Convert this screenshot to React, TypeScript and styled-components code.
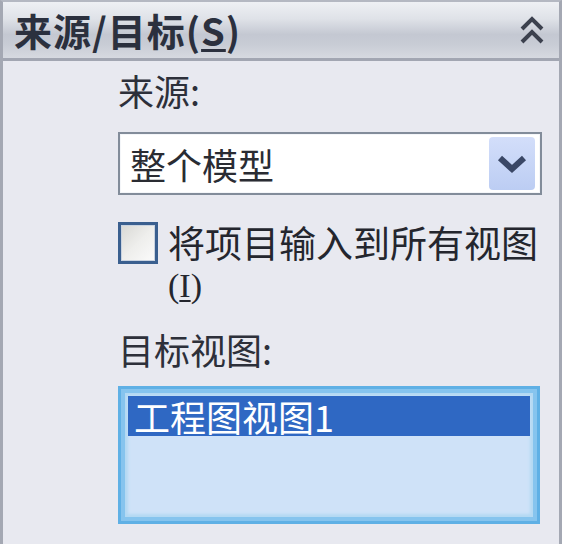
import React from "react";
import styled, { createGlobalStyle } from "styled-components";

const GlobalStyle = createGlobalStyle`
  html, body {
    margin: 0;
    padding: 0;
    background: #e8e9f0;
  }
  body {
    font-family: "Noto Sans CJK SC", "Noto Sans", sans-serif;
  }
`;

const Panel = styled.div`
  width: 562px;
  height: 544px;
  box-sizing: border-box;
  border-left: 3px solid #a4a8b3;
  border-right: 3px solid #a4a8b3;
  border-top: 2px solid #b4b8c2;
  background: #e8e9f0;
  display: flex;
  flex-direction: column;
  overflow: hidden;
`;

const Header = styled.div`
  height: 56px;
  flex-shrink: 0;
  display: flex;
  align-items: center;
  justify-content: space-between;
  padding: 0 14px 0 11px;
  background: linear-gradient(
    #eef0f4 0%,
    #dfe2e8 30%,
    #c4c8d2 58%,
    #c8ccd5 75%,
    #d6d9e0 100%
  );
  border-bottom: 3px solid #a2a6b2;
`;

const Title = styled.span`
  font-size: 38px;
  font-weight: 700;
  color: #2b303e;
  letter-spacing: 1px;
  line-height: 1;
  u {
    text-decoration-thickness: 3px;
    text-underline-offset: 3px;
  }
`;

const Body = styled.div`
  display: flex;
  flex-direction: column;
  padding: 8px 17px 0 115px;
`;

const Label = styled.div<{ $top?: number }>`
  font-size: 36px;
  line-height: 42px;
  color: #2d303a;
  margin-top: ${(p) => p.$top ?? 0}px;
`;

const Select = styled.div`
  margin-top: 21px;
  height: 63px;
  box-sizing: border-box;
  border: 2px solid #828c9a;
  box-shadow: inset 0 0 0 1px #f4f6f9;
  background: #fff;
  display: flex;
  align-items: center;
  justify-content: space-between;
  padding: 0 5px 0 10px;
`;

const SelectText = styled.span`
  font-size: 36px;
  line-height: 1;
  color: #2a2c33;
`;

const SelectButton = styled.div`
  width: 46px;
  height: 53px;
  border-radius: 4px;
  background: linear-gradient(#d3defa, #bccdf3);
  display: flex;
  align-items: center;
  justify-content: center;
`;

const CheckRow = styled.div`
  margin-top: 26px;
  display: flex;
  align-items: flex-start;
  gap: 10px;
`;

const Box = styled.div`
  width: 40px;
  height: 42px;
  flex-shrink: 0;
  box-sizing: border-box;
  border: 3px solid #3a5f8f;
  box-shadow: inset 0 0 0 1px #c9d3e0;
  background: linear-gradient(135deg, #d8d8d4 0%, #eeeeec 50%, #fbfbfb 100%);
  margin-top: 1px;
`;

const CheckText = styled.div`
  display: flex;
  flex-direction: column;
  color: #24262e;
  white-space: nowrap;
`;

const CheckLine = styled.span<{ $latin?: boolean }>`
  display: block;
  height: 42px;
  line-height: 42px;
  font-size: ${(p) => (p.$latin ? 34 : 37)}px;
  font-family: ${(p) =>
    p.$latin
      ? `"Liberation Serif", serif`
      : `"Noto Sans CJK SC", "Noto Sans", sans-serif`};
  margin-top: ${(p) => (p.$latin ? 2 : 0)}px;
  u {
    text-decoration-thickness: 2px;
    text-underline-offset: 3px;
  }
`;

const List = styled.div`
  margin-top: 16px;
  margin-right: 2px;
  height: 138px;
  box-sizing: border-box;
  border: 3px solid #5fb0e5;
  background: #cfe2f8;
  box-shadow: inset 0 0 0 4px #86c4ee, inset 0 0 3px 7px #b3d9f3;
  padding: 7px;
`;

const ListItem = styled.div<{ $selected?: boolean }>`
  height: 40px;
  display: flex;
  align-items: center;
  padding-left: 6px;
  font-size: 36px;
  color: ${(p) => (p.$selected ? "#ffffff" : "#222")};
  background: ${(p) => (p.$selected ? "#2f68c3" : "transparent")};
`;

const DoubleUp = () => (
  <svg width="26" height="32" viewBox="0 0 26 32">
    <path
      d="M3 15 L13 5 L23 15 M3 28 L13 18 L23 28"
      fill="none"
      stroke="#3c414e"
      strokeWidth="4"
    />
  </svg>
);

const ChevronDown = () => (
  <svg width="30" height="20" viewBox="0 0 30 20">
    <path
      d="M3 4 L15 15 L27 4"
      fill="none"
      stroke="#3a4766"
      strokeWidth="6"
      strokeLinejoin="miter"
    />
  </svg>
);

export default function App() {
  return (
    <>
      <GlobalStyle />
      <Panel>
        <Header>
          <Title>
            来源/目标(<u>S</u>)
          </Title>
          <DoubleUp />
        </Header>
        <Body>
          <Label>来源:</Label>
          <Select>
            <SelectText>整个模型</SelectText>
            <SelectButton>
              <ChevronDown />
            </SelectButton>
          </Select>
          <CheckRow>
            <Box />
            <CheckText>
              <CheckLine>将项目输入到所有视图</CheckLine>
              <CheckLine $latin>
                (<u>I</u>)
              </CheckLine>
            </CheckText>
          </CheckRow>
          <Label $top={21}>目标视图:</Label>
          <List>
            <ListItem $selected>工程图视图1</ListItem>
          </List>
        </Body>
      </Panel>
    </>
  );
}
